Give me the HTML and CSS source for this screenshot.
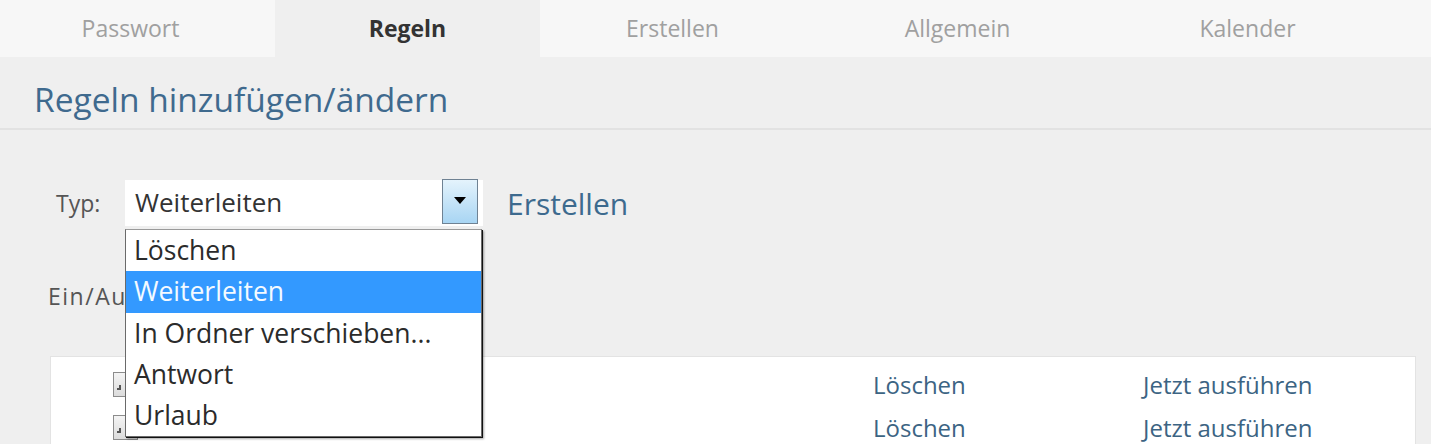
FILE: index.html
```html
<!DOCTYPE html>
<html lang="de">
<head>
<meta charset="utf-8">
<title>Regeln</title>
<link rel="stylesheet" href="styles.css">
</head>
<body>
<nav class="tabs">
  <div class="tab tab-1">Passwort</div>
  <div class="tab tab-2 active">Regeln</div>
  <div class="tab tab-3">Erstellen</div>
  <div class="tab tab-4">Allgemein</div>
  <div class="tab tab-5">Kalender</div>
</nav>
<header class="header">
  <h1 class="title">Regeln hinzufügen/ändern</h1>
</header>
<main class="content">
  <div class="type-row">
    <span class="label">Typ:</span>
    <div class="select-wrap">
      <div class="select">
        <span class="select-value">Weiterleiten</span>
        <span class="select-btn"><span class="arrow"></span></span>
      </div>
      <ul class="dropdown">
        <li class="opt">Löschen</li>
        <li class="opt selected">Weiterleiten</li>
        <li class="opt">In Ordner verschieben...</li>
        <li class="opt">Antwort</li>
        <li class="opt">Urlaub</li>
      </ul>
    </div>
    <a class="create">Erstellen</a>
  </div>
  <div class="toggle-label">Ein/Aus</div>
  <section class="panel">
    <div class="rule-row">
      <span></span>
      <span class="check"><span class="mark"></span></span>
      <span class="name"></span>
      <a class="link">Löschen</a>
      <a class="link">Jetzt ausführen</a>
    </div>
    <div class="rule-row">
      <span></span>
      <span class="check"><span class="mark"></span></span>
      <span class="name"></span>
      <a class="link">Löschen</a>
      <a class="link">Jetzt ausführen</a>
    </div>
  </section>
</main>
</body>
</html>
```
FILE: styles.css
```css
* { box-sizing: border-box; }
html, body {
  margin: 0;
  padding: 0;
  background: #efefef;
  font-family: "Open Sans", "Noto Sans", sans-serif;
  overflow: hidden;
  height: 444px;
}

.tabs {
  display: flex;
  height: 57px;
  background: #f7f7f7;
}
.tab {
  height: 57px;
  line-height: 57px;
  text-align: center;
  font-size: 23px;
  color: #a0a0a0;
}
.tab-1 { width: 275px; padding-right: 14px; }
.tab-2 { width: 265px; }
.tab-3 { width: 265px; }
.tab-4 { width: 305px; }
.tab-5 { width: 275px; }
.tab.active {
  background: #efefef;
  color: #333;
  font-weight: 700;
}

.header {
  padding: 22px 0 9px 34px;
  border-bottom: 2px solid #e2e2e2;
}
.title {
  margin: 0;
  font-size: 33.5px;
  line-height: 40px;
  font-weight: 400;
  color: #3f6a8e;
}

.content {
  padding: 50px 0 0 48px;
}

.type-row {
  display: flex;
  align-items: center;
}
.label {
  width: 77px;
  padding-left: 8px;
  font-size: 23px;
  color: #555;
}
.select-wrap {
  position: relative;
  width: 358px;
}
.select {
  display: flex;
  align-items: stretch;
  height: 46px;
  background: #fff;
  padding: 0 5px 2px 10px;
}
.select-value {
  flex: 1;
  align-self: center;
  font-size: 26px;
  color: #333;
}
.select-btn {
  width: 36px;
  margin-top: -1px;
  border: 1px solid #6f8293;
  background: linear-gradient(#e4f3fc, #a8d5f3);
  display: flex;
  align-items: center;
  justify-content: center;
}
.arrow {
  width: 0;
  height: 0;
  border-left: 6px solid transparent;
  border-right: 6px solid transparent;
  border-top: 7px solid #000;
  margin-top: -2px;
}
.dropdown {
  position: absolute;
  top: calc(100% + 3px);
  left: 0;
  width: 357px;
  margin: 0;
  padding: 0;
  list-style: none;
  background: #fff;
  border: 1px solid #6a6a6a;
  border-top-color: #9a9a9a;
  box-shadow: 1px 1px 0 #111, 2px 2px 2px rgba(0,0,0,0.35);
  z-index: 5;
}
.opt {
  height: 41.3px;
  line-height: 41px;
  padding-left: 8px;
  font-size: 26.5px;
  color: #2b2b2b;
  white-space: nowrap;
}
.opt.selected {
  background: #3399ff;
  color: #f4faff;
}

.create {
  margin-left: 24px;
  font-size: 30px;
  color: #3d6a8e;
}

.toggle-label {
  margin-top: 55px;
  line-height: 30px;
  font-size: 23px;
  letter-spacing: 1.5px;
  color: #555;
}

.panel {
  margin-top: 45px;
  margin-left: 2px;
  width: 1366px;
  background: #fff;
  border: 1px solid #e3e3e3;
  padding-top: 6px;
}
.rule-row {
  display: grid;
  grid-template-columns: 62px 25px 1fr 270px 272px;
  align-items: center;
  height: 43px;
}
.check {
  width: 25px;
  height: 25px;
  border: 1px solid #8c8c8c;
  background: linear-gradient(#f4f4f4, #dcdcdc);
  position: relative;
}
.mark {
  position: absolute;
  left: 3px;
  top: 12px;
  width: 4px;
  height: 5px;
  border-right: 2px solid #555;
  border-bottom: 2px solid #555;
}
.link {
  font-size: 24px;
  color: #3c6483;
}
```
